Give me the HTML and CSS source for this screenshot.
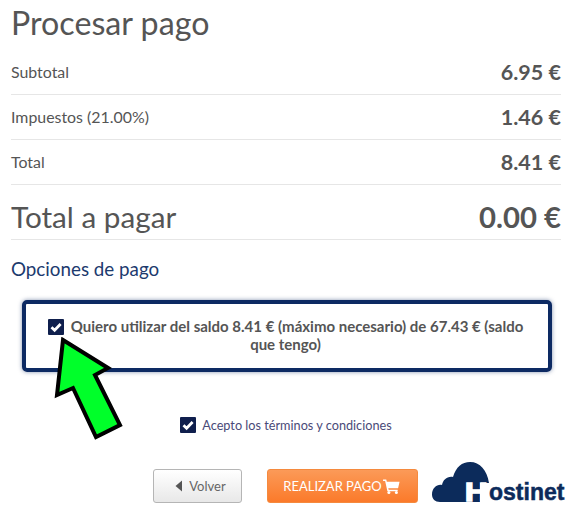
FILE: index.html
```html
<!DOCTYPE html>
<html lang="es">
<head>
<meta charset="utf-8">
<title>Procesar pago</title>
<link rel="stylesheet" href="styles.css">
</head>
<body>
<main class="page">
  <h1 class="title">Procesar pago</h1>
  <div class="row"><span class="label">Subtotal</span><strong class="value">6.95 €</strong></div>
  <div class="row"><span class="label">Impuestos (21.00%)</span><strong class="value">1.46 €</strong></div>
  <div class="row"><span class="label">Total</span><strong class="value">8.41 €</strong></div>
  <div class="row row-big"><span class="label-big">Total a pagar</span><strong class="value-big">0.00 €</strong></div>
  <h2 class="subtitle">Opciones de pago</h2>
  <div class="balance-box">
    <p class="balance-text"><span class="check check-inline"><svg viewBox="0 0 16 16" width="16" height="16"><path d="M3.5 8.3 6.6 11.3 12.6 5" fill="none" stroke="#fff" stroke-width="2.8"/></svg></span>Quiero utilizar del saldo 8.41 € (máximo necesario) de 67.43 € (saldo que tengo)</p>
  </div>
  <div class="terms"><span class="check"><svg viewBox="0 0 16 16" width="16" height="16"><path d="M3.5 8.3 6.6 11.3 12.6 5" fill="none" stroke="#fff" stroke-width="2.8"/></svg></span><span>Acepto los términos y condiciones</span></div>
  <div class="actions">
    <button class="btn btn-back"><svg class="back-icon" viewBox="0 0 8 12" width="8" height="12"><path d="M7 0.5V11.5L0.5 6Z" fill="#555"/></svg>Volver</button>
    <button class="btn btn-pay">REALIZAR PAGO<svg class="cart" viewBox="0 0 18 16" width="17" height="15"><path d="M0 0.5H3.4L4 3H17.6L16 9.8H5.6L6 11.4H15.6V13H4.6L2.2 2.2H0Z" fill="#fff"/><circle cx="6.2" cy="14.4" r="1.6" fill="#fff"/><circle cx="14.2" cy="14.4" r="1.6" fill="#fff"/></svg></button>
    <div class="logo">
      <svg class="cloud" viewBox="0 0 58 40" width="58" height="40"><path d="M8 40C3 40 0 37 0 32.500C0 26 5 22 10 23C11 18 15 14 21 15C24 5 30 0 38 0C48 0 55 8 57 21H48V40Z" fill="#0c2b5b"/></svg>
      <span class="logo-h">H</span><span class="logo-text">ostinet</span>
    </div>
  </div>
  <svg class="arrow" viewBox="0 0 80 110" width="80" height="110"><path d="M17 3 62 31 49 38 74 88 50 100 27 51 11 58Z" fill="#00ff2a" stroke="#000" stroke-width="4"/></svg>
</main>
</body>
</html>
```

FILE: styles.css
```css
* { box-sizing: border-box; }
html, body { margin: 0; background: #fff; }
body { font-family: Lato, "Open Sans", sans-serif; color: #555; }
.page { position: relative; width: 579px; height: 513px; padding: 0 18px 0 11px; overflow: hidden; }
.title { margin: 0; height: 50px; padding-top: 3px; font-size: 32.2px; line-height: 40px; font-weight: 400; color: #555; }
.row { display: flex; justify-content: space-between; align-items: center; height: 45px; border-bottom: 1px solid #e6e6e6; }
.label { font-size: 15.9px; margin-bottom: 2px; }
.value { font-size: 21.5px; font-weight: 700; color: #555; }
.row-big { height: 55px; padding-top: 9px; }
.label-big { font-size: 29.7px; }
.value-big { font-size: 29.3px; font-weight: 700; }
.subtitle { margin: 0; height: 60px; padding-top: 17px; font-size: 18.8px; line-height: 24px; font-weight: 400; color: #1c3a6e; }
.balance-box { margin-left: 11px; width: 530px; height: 72px; padding: 13px 22px 0 19px; border: 4px solid #0d2a63; border-radius: 5px; box-shadow: 0 0 4px rgba(13,42,99,.5); }
.balance-text { margin: 0; font-size: 15px; line-height: 18px; font-weight: 700; text-align: center; color: #555; }
.check { display: inline-flex; width: 16px; height: 16px; background: #0f1f4d; border-radius: 1px; flex: none; }
.check-inline { vertical-align: -3px; margin-right: 7px; }
.terms { display: flex; align-items: center; justify-content: center; gap: 6px; height: 18px; margin-top: 44px; width: 550px; font-size: 12.7px; color: #4a4a78; }
.actions { display: flex; align-items: flex-start; margin-top: 35px; padding-left: 142px; }
.btn { flex: none; height: 34px; border-radius: 3px; font-family: inherit; font-size: 13px; padding: 0; display: flex; align-items: center; justify-content: center; }
.btn-back { width: 89px; padding-left: 6px; border: 1px solid #b5b5b5; background: linear-gradient(#fff, #e8e8e8); color: #666; }
.back-icon { margin-right: 6px; }
.btn-pay { width: 151px; margin-left: 25px; padding-right: 2px; border: 1px solid #f58a3e; background: linear-gradient(#fb9a58, #fb7a2a); color: #fff; }
.cart { margin-left: 1px; }
.logo { position: relative; flex: none; width: 133px; height: 40px; margin: -7px 0 0 14px; color: #0c2b5b; }
.cloud { position: absolute; left: 0; top: 0; }
.logo-h { position: absolute; left: 33px; top: 18px; font: 700 25px/24px "Liberation Sans", sans-serif; color: #fff; -webkit-text-stroke: 1.5px #fff; transform: scaleX(1.25); transform-origin: left center; }
.logo-text { position: absolute; left: 57px; top: 17px; font: 700 23px/26px "Liberation Sans", sans-serif; -webkit-text-stroke: 0.5px #0c2b5b; }
.arrow { position: absolute; left: 46px; top: 337px; }
```
